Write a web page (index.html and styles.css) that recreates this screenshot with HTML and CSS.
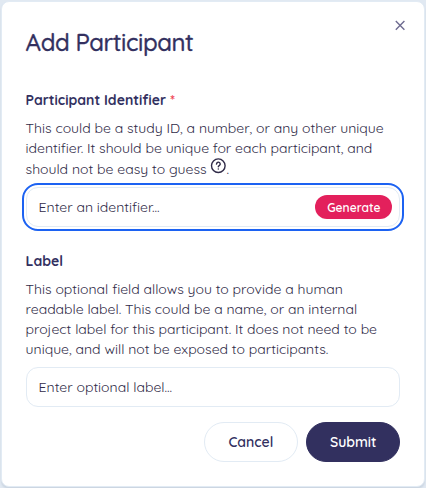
FILE: index.html
```
<!DOCTYPE html>
<html lang="en">
<head>
<meta charset="utf-8">
<title>Add Participant</title>
<link rel="stylesheet" href="styles.css">
</head>
<body>
<form class="dialog">
  <header class="head">
    <h1>Add Participant</h1>
    <button class="close" type="button" aria-label="Close"><svg viewBox="0 0 12 12" width="12" height="12"><path d="M1.8 2.1l8.6 8.6M10.4 2.1l-8.6 8.6"/></svg></button>
  </header>
  <section class="field">
    <h2>Participant Identifier <span class="req">*</span></h2>
    <p>
      <span class="line">This could be a study ID, a number, or any other unique</span>
      <span class="line">identifier. It should be unique for each participant, and</span>
      <span class="line last">should not be easy to guess<svg class="help" viewBox="0 0 16 16" width="16" height="16"><circle cx="8.3" cy="7.7" r="6.8"/><path d="M6.5 6.1a1.85 1.85 0 1 1 2.8 1.5c-.7.4-1 .7-1 1.2"/><path d="M8.3 11v.1"/></svg>.</span>
    </p>
    <div class="input focus"><span>Enter an identifier...</span><button class="generate" type="button">Generate</button></div>
  </section>
  <section class="field second">
    <h2>Label</h2>
    <p>
      <span class="line">This optional field allows you to provide a human</span>
      <span class="line">readable label. This could be a name, or an internal</span>
      <span class="line">project label for this participant. It does not need to be</span>
      <span class="line">unique, and will not be exposed to participants.</span>
    </p>
    <div class="input">Enter optional label...</div>
  </section>
  <footer class="actions">
    <button class="btn cancel" type="button">Cancel</button>
    <button class="btn submit" type="button">Submit</button>
  </footer>
</form>
</body>
</html>
```

FILE: styles.css
```
* { box-sizing: border-box; }
body {
  margin: 0;
  height: 488px;
  padding: 1px 1px 1px;
  overflow: hidden;
  background: #e1e9f2;
  font-family: Quicksand, Lato, sans-serif;
  color: #302b48;
}
.dialog {
  height: 486px;
  padding: 24px 23.6px 0 23.6px;
  border: 1px solid #e2ebf4;
  border-radius: 8px;
  background: #fff;
  box-shadow: 0 2px 2px #cbd5e1;
}
.head { display: flex; justify-content: space-between; height: 64px; }
h1 { margin: -1px 0 0; font-size: 24px; line-height: 34px; font-weight: 500; letter-spacing: -0.42px; -webkit-text-stroke: 0.3px #32305f; color: #32305f; white-space: nowrap; }
.close { width: 12px; height: 12px; margin: -7px -6px 0 0; padding: 0; border: 0; background: none; }
.close svg { display: block; fill: none; stroke: #6e6b90; stroke-width: 1.4; }
.field { height: 161px; }
h2 { margin: 0 0 8px; font-size: 14px; line-height: 20px; font-weight: 700; color: #32305f; }
.req { color: #f04453; }
p { margin: 0; font-size: 14px; line-height: 20px; }
.line { display: block; white-space: nowrap; height: 20px; }
.last { height: 21px; line-height: 22px; }
.help { margin: 0 0 0 3.8px; vertical-align: 0; fill: none; stroke: #302b48; stroke-width: 1.4; stroke-linecap: round; }
.input {
  display: flex;
  align-items: center;
  justify-content: space-between;
  height: 40px;
  margin-top: 8px;
  padding: 0 7px 0 12px;
  border: 1px solid #e2ebf4;
  border-radius: 12px;
  font-size: 14px;
}
.focus { outline: 2px solid #1c62f2; outline-offset: 2px; }
button { font-family: inherit; }
.generate { width: 77px; height: 24px; padding: 0; border: 0; border-radius: 12px; background: #e3205c; color: #fff; font-size: 12px; font-weight: 600; }
.second { height: 171px; }
.actions { display: flex; justify-content: flex-end; gap: 8px; }
.btn { width: 94.4px; height: 40px; padding: 0; border: 1px solid #e2ebf4; border-radius: 20px; background: #fff; color: #32305f; font-size: 14px; font-weight: 600; }
.submit { border-color: #32305f; background: #32305f; color: #fff; }
```
